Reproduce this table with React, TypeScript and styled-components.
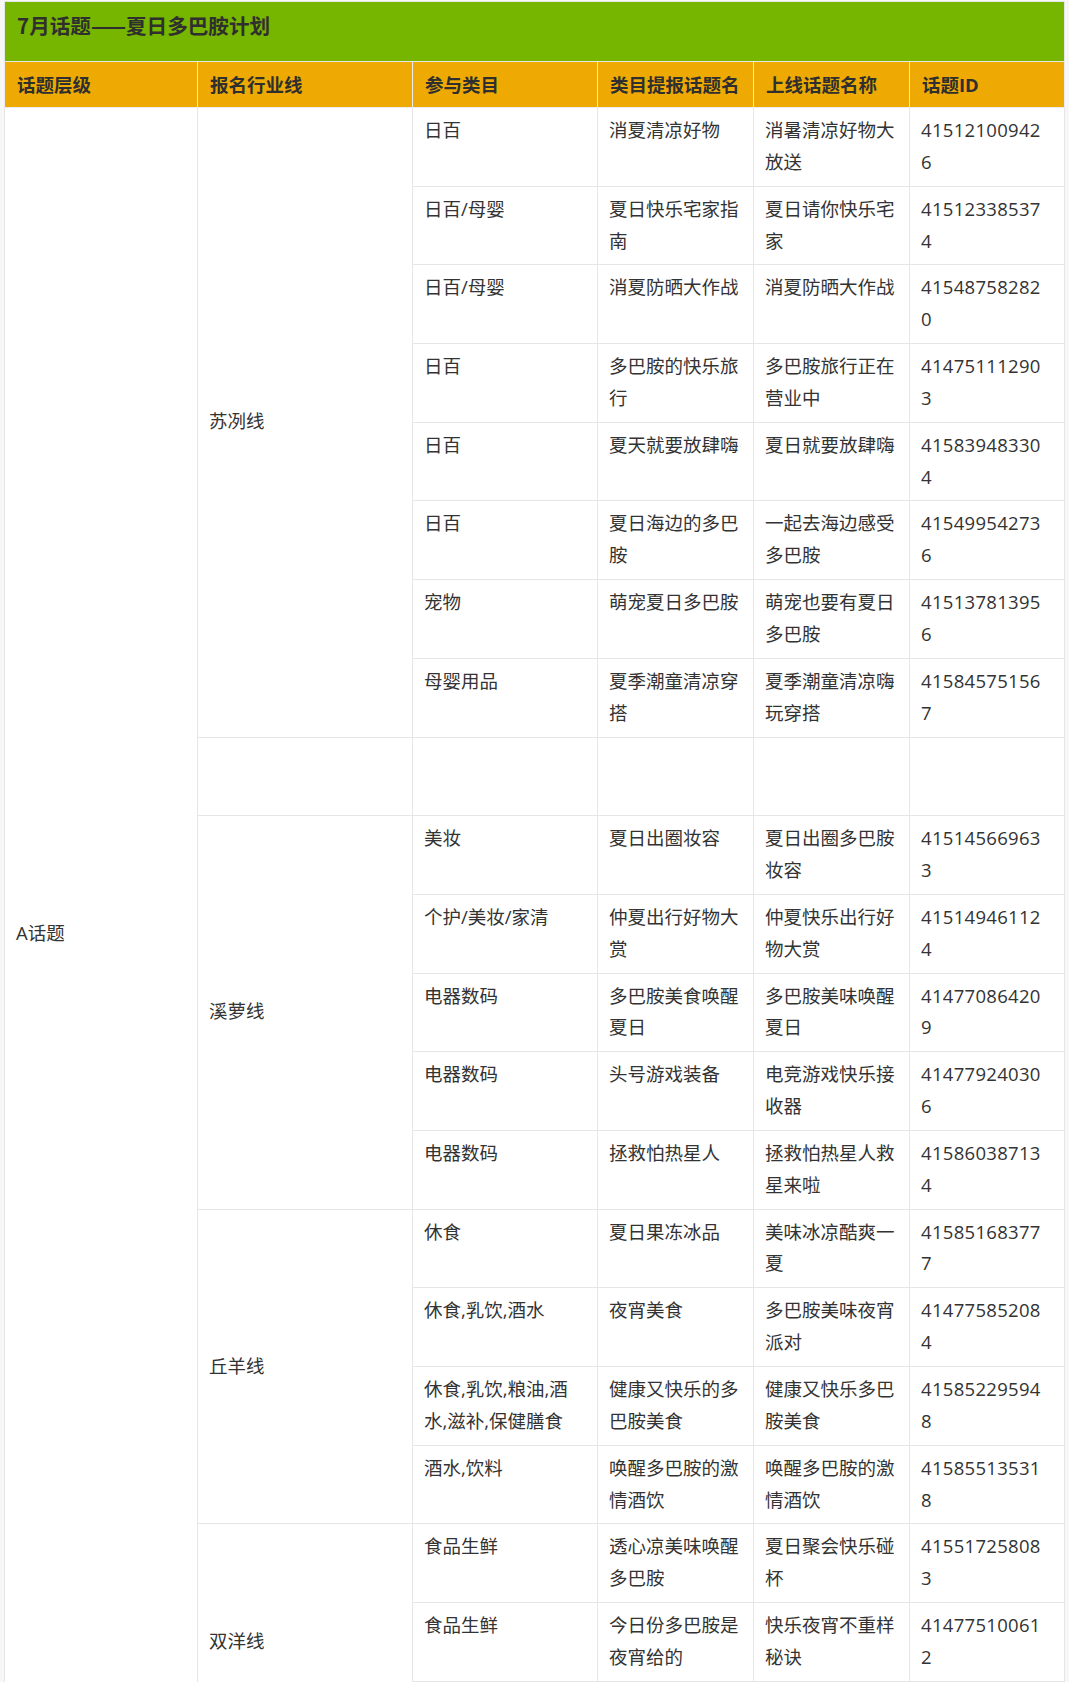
import React from 'react'
import styled, { createGlobalStyle } from 'styled-components'

const GlobalStyle = createGlobalStyle`
  html, body {
    margin: 0;
    padding: 0;
    background: #f7f7f7;
  }
`

type Topic = [string, string, string, string]

interface Group {
  line: string
  rows: (Topic | null)[]
}

const groups: Group[] = [
  {
    line: '苏冽线',
    rows: [
      ['日百', '消夏清凉好物', '消暑清凉好物大放送', '415121009426'],
      ['日百/母婴', '夏日快乐宅家指南', '夏日请你快乐宅家', '415123385374'],
      ['日百/母婴', '消夏防晒大作战', '消夏防晒大作战', '415487582820'],
      ['日百', '多巴胺的快乐旅行', '多巴胺旅行正在营业中', '414751112903'],
      ['日百', '夏天就要放肆嗨', '夏日就要放肆嗨', '415839483304'],
      ['日百', '夏日海边的多巴胺', '一起去海边感受多巴胺', '415499542736'],
      ['宠物', '萌宠夏日多巴胺', '萌宠也要有夏日多巴胺', '415137813956'],
      ['母婴用品', '夏季潮童清凉穿搭', '夏季潮童清凉嗨玩穿搭', '415845751567'],
    ],
  },
  { line: '', rows: [null] },
  {
    line: '溪萝线',
    rows: [
      ['美妆', '夏日出圈妆容', '夏日出圈多巴胺妆容', '415145669633'],
      ['个护/美妆/家清', '仲夏出行好物大赏', '仲夏快乐出行好物大赏', '415149461124'],
      ['电器数码', '多巴胺美食唤醒夏日', '多巴胺美味唤醒夏日', '414770864209'],
      ['电器数码', '头号游戏装备', '电竞游戏快乐接收器', '414779240306'],
      ['电器数码', '拯救怕热星人', '拯救怕热星人救星来啦', '415860387134'],
    ],
  },
  {
    line: '丘羊线',
    rows: [
      ['休食', '夏日果冻冰品', '美味冰凉酷爽一夏', '415851683777'],
      ['休食,乳饮,酒水', '夜宵美食', '多巴胺美味夜宵派对', '414775852084'],
      ['休食,乳饮,粮油,酒水,滋补,保健膳食', '健康又快乐的多巴胺美食', '健康又快乐多巴胺美食', '415852295948'],
      ['酒水,饮料', '唤醒多巴胺的激情酒饮', '唤醒多巴胺的激情酒饮', '415855135318'],
    ],
  },
  {
    line: '双洋线',
    rows: [
      ['食品生鲜', '透心凉美味唤醒多巴胺', '夏日聚会快乐碰杯', '415517258083'],
      ['食品生鲜', '今日份多巴胺是夜宵给的', '快乐夜宵不重样秘诀', '414775100612'],
      null,
    ],
  },
]

const totalRows = groups.reduce((n, g) => n + g.rows.length, 0)
const colWidths = [193, 215, 185, 156, 156, 155]
const headers = ['话题层级', '报名行业线', '参与类目', '类目提报话题名', '上线话题名称', '话题ID']

const Page = styled.div`
  padding: 1px 0 0 4px;
`

const Table = styled.table`
  width: 1060px;
  table-layout: fixed;
  border-collapse: collapse;
  background: #fff;
  border: 1px solid #e6e6e6;
  font-family: 'Open Sans', 'Noto Sans CJK SC', sans-serif;
  font-size: 18.5px;
  line-height: 31.85px;
  color: #333;
`

const TitleCell = styled.th`
  background: #76b500;
  border: 1px solid #e6e6e6;
  padding: 7px 12px 20px;
  text-align: left;
  font-family: 'Noto Sans CJK SC', sans-serif;
  font-size: 20.6px;
  line-height: 32px;
  font-weight: 700;
  color: #2f2f2f;
`

const HeadCell = styled.th`
  background: #eeaa02;
  border: 1px solid #ececec;
  padding: 6.5px 12px;
  line-height: 32px;
  text-align: left;
  font-weight: 700;
  color: #2f2f2f;
`

const Cell = styled.td<{ $middle?: boolean }>`
  border: 1px solid #e6e6e6;
  padding: 6px 13px 8px 11px;
  vertical-align: ${p => (p.$middle ? 'middle' : 'top')};
`

const IdCell = styled(Cell)`
  padding-right: 20px;
  word-break: break-all;
  letter-spacing: 0.3px;
`

const Blank = () => (
  <>
    {'\u00a0'}
    <br />
    {'\u00a0'}
  </>
)

export default function App() {
  let first = true
  return (
    <Page>
      <GlobalStyle />
      <Table>
        <colgroup>
          {colWidths.map((w, i) => (
            <col key={i} style={{ width: w }} />
          ))}
        </colgroup>
        <thead>
          <tr>
            <TitleCell colSpan={6}>7月话题——夏日多巴胺计划</TitleCell>
          </tr>
          <tr>
            {headers.map(h => (
              <HeadCell key={h}>{h}</HeadCell>
            ))}
          </tr>
        </thead>
        <tbody>
          {groups.map((g, gi) =>
            g.rows.map((r, ri) => {
              const showLevel = first
              first = false
              return (
                <tr key={`${gi}-${ri}`}>
                  {showLevel && (
                    <Cell $middle rowSpan={totalRows}>
                      A话题
                    </Cell>
                  )}
                  {ri === 0 && (
                    <Cell $middle rowSpan={g.rows.length}>
                      {g.line}
                    </Cell>
                  )}
                  {r ? (
                    <>
                      <Cell>{r[0]}</Cell>
                      <Cell>{r[1]}</Cell>
                      <Cell>{r[2]}</Cell>
                      <IdCell>{r[3]}</IdCell>
                    </>
                  ) : (
                    <>
                      <Cell>
                        <Blank />
                      </Cell>
                      <Cell />
                      <Cell />
                      <Cell />
                    </>
                  )}
                </tr>
              )
            })
          )}
        </tbody>
      </Table>
    </Page>
  )
}
